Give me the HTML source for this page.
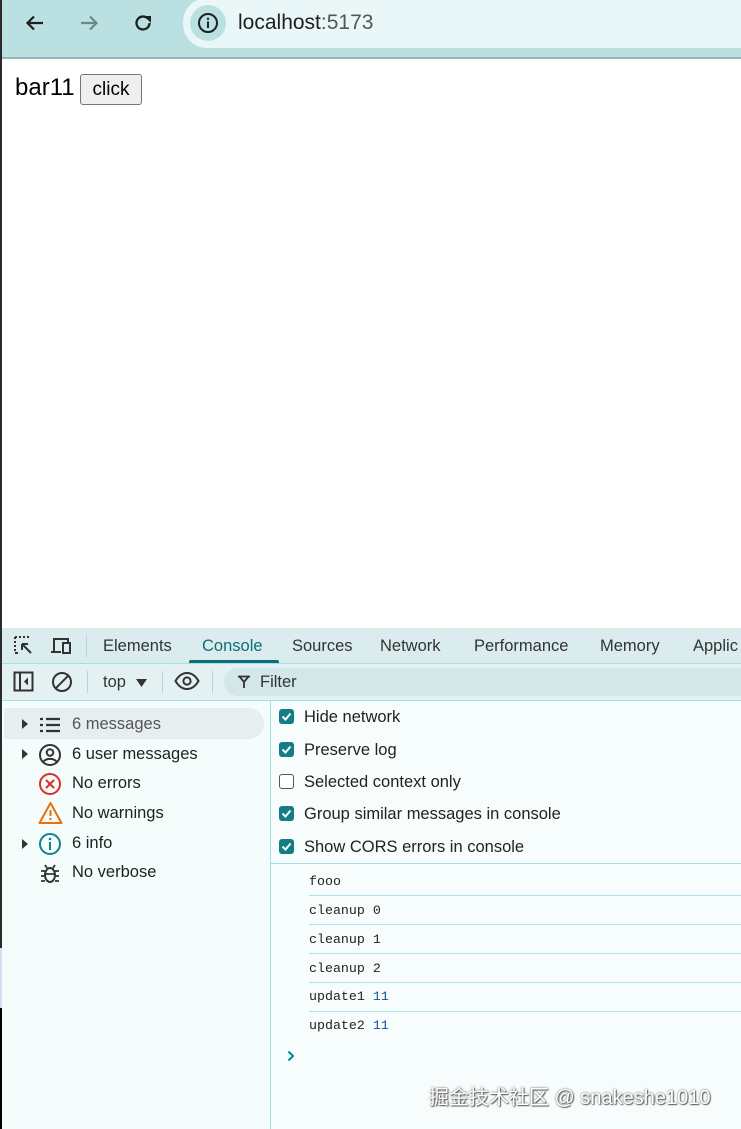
<!DOCTYPE html>
<html><head><meta charset="utf-8"><style>
*{margin:0;padding:0;box-sizing:border-box}
body{width:741px;height:1129px;position:relative;overflow:hidden;background:#fff;font-family:"Liberation Sans","Noto Sans CJK SC",sans-serif;color:#1f1f1f}
.a{position:absolute}
.t{position:absolute;white-space:nowrap}
.mono{font-family:"Liberation Mono",monospace;font-size:13.3px;color:#222}
.cb{position:absolute;left:279px;width:15px;height:15px;border-radius:3px;background:#137d85}
.cb svg{position:absolute;left:1px;top:1px}
.cbo{position:absolute;left:279px;width:15px;height:15px;border-radius:3px;border:1.5px solid #555;background:#fff}
.rl{position:absolute;left:309px;right:0;height:1px;background:#a6e4ee}
</style></head><body>
<div class="a" style="left:0;top:0;width:741px;height:58px;background:#bae0e2"></div>
<div class="a" style="left:0;top:57px;width:741px;height:2px;background:#94b7bb"></div>
<div class="a" style="left:183px;top:-2px;width:600px;height:50px;background:#eaf7f8;border-radius:24px 0 0 24px"></div>
<div class="a" style="left:190px;top:5px;width:36px;height:36px;border-radius:50%;background:#bae0e2"></div>
<svg class="a" style="left:196px;top:11px" width="24" height="24" viewBox="0 0 24 24"><circle cx="12" cy="12" r="9" fill="none" stroke="#1f1f1f" stroke-width="2"/><rect x="11" y="10.5" width="2" height="6.5" fill="#1f1f1f"/><circle cx="12" cy="7.8" r="1.2" fill="#1f1f1f"/></svg>
<div class="t" style="left:238px;top:11px;font-size:21px;color:#1f1f1f">localhost<span style="color:#555">:5173</span></div>
<svg class="a" style="left:24px;top:12px" width="22" height="22" viewBox="0 0 22 22"><path d="M19 11H4M10 4.5L3.5 11l6.5 6.5" fill="none" stroke="#1f1f1f" stroke-width="2.2"/></svg>
<svg class="a" style="left:78px;top:12px" width="22" height="22" viewBox="0 0 22 22"><path d="M3 11h15M12 4.5l6.5 6.5-6.5 6.5" fill="none" stroke="#6f8688" stroke-width="2.2"/></svg>
<svg class="a" style="left:132px;top:12px" width="22" height="22" viewBox="0 0 22 22"><path d="M17.5 11a6.5 6.5 0 1 1-2-4.7" fill="none" stroke="#1f1f1f" stroke-width="2.3"/><path d="M12 4h7v7z" fill="#1f1f1f"/></svg>
<div class="a" style="left:0;top:0;width:2px;height:948px;background:#2b2b2b"></div>
<div class="t" style="left:15px;top:74px;font-size:24px;color:#000">bar11</div>
<div class="a" style="left:80px;top:74px;width:62px;height:31px;border:1px solid #767676;border-radius:3px;background:#efefef;font-size:19px;color:#000;text-align:center;line-height:29px">click</div>
<div class="a" style="left:2px;top:628px;width:739px;height:36px;background:#dbecee"></div>
<div class="a" style="left:2px;top:663px;width:739px;height:1px;background:#a6dfe6"></div>
<svg class="a" style="left:14px;top:636px" width="22" height="22" viewBox="0 0 22 22"><path d="M1 1h2M5 1h2M9 1h2M13 1h2M1 1v2M1 5v2M1 9v2M1 13v2M1 17h3" stroke="#333" stroke-width="2" fill="none"/><path d="M8 8l9 9M8 8h6M8 8v6" stroke="#333" stroke-width="2" fill="none"/></svg>
<svg class="a" style="left:50px;top:636px" width="24" height="20" viewBox="0 0 24 20"><path d="M4 15V3h14v3" fill="none" stroke="#333" stroke-width="2"/><path d="M1 16h10" stroke="#333" stroke-width="2"/><rect x="13" y="7" width="7" height="10" fill="none" stroke="#333" stroke-width="2"/></svg>
<div class="a" style="left:86px;top:635px;width:1px;height:22px;background:#b5d5d8"></div>
<div class="t" style="left:103px;top:637px;font-size:16.5px;color:#333">Elements</div>
<div class="t" style="left:202px;top:637px;font-size:16.5px;color:#0e6e74">Console</div>
<div class="a" style="left:189px;top:660px;width:90px;height:3px;background:#0e6e74;border-radius:2px 2px 0 0"></div>
<div class="t" style="left:292px;top:637px;font-size:16.5px;color:#333">Sources</div>
<div class="t" style="left:380px;top:637px;font-size:16.5px;color:#333">Network</div>
<div class="t" style="left:474px;top:637px;font-size:16.5px;color:#333">Performance</div>
<div class="t" style="left:600px;top:637px;font-size:16.5px;color:#333">Memory</div>
<div class="t" style="left:693px;top:637px;font-size:16.5px;color:#333">Applic</div>
<div class="a" style="left:2px;top:664px;width:739px;height:36px;background:#e4f1f2"></div>
<div class="a" style="left:2px;top:700px;width:739px;height:1px;background:#a6dfe6"></div>
<svg class="a" style="left:13px;top:671px" width="21" height="21" viewBox="0 0 21 21"><rect x="1.5" y="1.5" width="18" height="18" fill="none" stroke="#333" stroke-width="2"/><path d="M7 2v17" stroke="#333" stroke-width="2"/><path d="M15 6.5l-4 4 4 4z" fill="#333"/></svg>
<svg class="a" style="left:51px;top:671px" width="22" height="22" viewBox="0 0 22 22"><circle cx="11" cy="11" r="9" fill="none" stroke="#333" stroke-width="2"/><path d="M4.6 17.4L17.4 4.6" stroke="#333" stroke-width="2"/></svg>
<div class="a" style="left:87px;top:671px;width:1px;height:22px;background:#b5d5d8"></div>
<div class="t" style="left:103px;top:673px;font-size:16.5px;color:#333">top</div>
<svg class="a" style="left:135px;top:678px" width="13" height="10" viewBox="0 0 13 10"><path d="M1 1h11L6.5 9z" fill="#333"/></svg>
<div class="a" style="left:162px;top:671px;width:1px;height:22px;background:#b5d5d8"></div>
<svg class="a" style="left:174px;top:671px" width="26" height="20" viewBox="0 0 26 20"><path d="M1.5 10C5 4 9 2 13 2s8 2 11.5 8C21 16 17 18 13 18S5 16 1.5 10z" fill="none" stroke="#333" stroke-width="2"/><circle cx="13" cy="10" r="3.6" fill="none" stroke="#333" stroke-width="2"/></svg>
<div class="a" style="left:212px;top:671px;width:1px;height:22px;background:#b5d5d8"></div>
<div class="a" style="left:224px;top:668px;width:530px;height:28px;border-radius:14px;background:#d3e6e8"></div>
<svg class="a" style="left:237px;top:675px" width="14" height="14" viewBox="0 0 14 14"><path d="M1 1.5h12M2.5 1.5l4.5 5.5v6M11.5 1.5L7 7" fill="none" stroke="#333" stroke-width="1.8"/></svg>
<div class="t" style="left:260px;top:673px;font-size:16.5px;color:#333">Filter</div>
<div class="a" style="left:2px;top:701px;width:268px;height:428px;background:#f5fcfc"></div>
<div class="a" style="left:0;top:948px;width:2px;height:60px;background:#d8dff0"></div>
<div class="a" style="left:0;top:1008px;width:2px;height:121px;background:#000"></div>
<div class="a" style="left:4px;top:708px;width:260px;height:31px;border-radius:0 16px 16px 0;background:#e7eeef"></div>
<div class="a" style="left:270px;top:701px;width:1px;height:428px;background:#a6dfe6"></div>
<svg class="a" style="left:21px;top:719px" width="8" height="10"><path d="M1 0l6 5-6 5z" fill="#333"/></svg>
<svg class="a" style="left:21px;top:749px" width="8" height="10"><path d="M1 0l6 5-6 5z" fill="#333"/></svg>
<svg class="a" style="left:21px;top:839px" width="8" height="10"><path d="M1 0l6 5-6 5z" fill="#333"/></svg>
<svg class="a" style="left:39px;top:715px" width="22" height="20" viewBox="0 0 22 20"><path d="M1 4h3M1 10h3M1 16h3M7 4h14M7 10h14M7 16h14" stroke="#333" stroke-width="2.2"/></svg>
<svg class="a" style="left:38px;top:743px" width="24" height="24" viewBox="0 0 24 24"><circle cx="12" cy="12" r="10" fill="none" stroke="#333" stroke-width="2"/><circle cx="12" cy="9.5" r="3.3" fill="none" stroke="#333" stroke-width="2"/><path d="M5.5 18.5c3-3.5 10-3.5 13 0" fill="none" stroke="#333" stroke-width="2"/></svg>
<svg class="a" style="left:38px;top:772px" width="24" height="24" viewBox="0 0 24 24"><circle cx="12" cy="12" r="10" fill="none" stroke="#d93025" stroke-width="2"/><path d="M8 8l8 8M16 8l-8 8" stroke="#d93025" stroke-width="2"/></svg>
<svg class="a" style="left:38px;top:801px" width="25" height="24" viewBox="0 0 25 24"><path d="M12.5 2L23.5 22H1.5z" fill="none" stroke="#e8710a" stroke-width="2" stroke-linejoin="round"/><path d="M12.5 9v6" stroke="#e8710a" stroke-width="2"/><circle cx="12.5" cy="18" r="1.2" fill="#e8710a"/></svg>
<svg class="a" style="left:38px;top:832px" width="24" height="24" viewBox="0 0 24 24"><circle cx="12" cy="12" r="10" fill="none" stroke="#10848c" stroke-width="2"/><rect x="11" y="10" width="2" height="8" fill="#10848c"/><circle cx="12" cy="7" r="1.3" fill="#10848c"/></svg>
<svg class="a" style="left:40px;top:862px" width="20" height="22" viewBox="0 0 20 22"><ellipse cx="10" cy="13" rx="5" ry="7" fill="none" stroke="#333" stroke-width="2"/><path d="M7 6l-2-3M13 6l2-3M1 9h4M15 9h4M1 14h4M15 14h4M1 19h4M15 19h4M6 12h8" stroke="#333" stroke-width="1.8"/></svg>
<div class="t" style="left:72px;top:715px;font-size:16.5px;color:#555">6 messages</div>
<div class="t" style="left:72px;top:745px;font-size:16.5px;color:#222">6 user messages</div>
<div class="t" style="left:72px;top:774px;font-size:16.5px;color:#222">No errors</div>
<div class="t" style="left:72px;top:804px;font-size:16.5px;color:#222">No warnings</div>
<div class="t" style="left:72px;top:834px;font-size:16.5px;color:#222">6 info</div>
<div class="t" style="left:72px;top:863px;font-size:16.5px;color:#222">No verbose</div>
<div class="a" style="left:271px;top:701px;width:470px;height:428px;background:#f7fdfd"></div>
<div class="cb" style="top:709px"><svg width="13" height="13" viewBox="0 0 13 13"><path d="M2.5 6.5l3 3 5-6" fill="none" stroke="#fff" stroke-width="2"/></svg></div>
<div class="cb" style="top:742px"><svg width="13" height="13" viewBox="0 0 13 13"><path d="M2.5 6.5l3 3 5-6" fill="none" stroke="#fff" stroke-width="2"/></svg></div>
<div class="cbo" style="top:774px"></div>
<div class="cb" style="top:806px"><svg width="13" height="13" viewBox="0 0 13 13"><path d="M2.5 6.5l3 3 5-6" fill="none" stroke="#fff" stroke-width="2"/></svg></div>
<div class="cb" style="top:839px"><svg width="13" height="13" viewBox="0 0 13 13"><path d="M2.5 6.5l3 3 5-6" fill="none" stroke="#fff" stroke-width="2"/></svg></div>
<div class="t" style="left:304px;top:708px;font-size:16.5px;color:#222">Hide network</div>
<div class="t" style="left:304px;top:741px;font-size:16.5px;color:#222">Preserve log</div>
<div class="t" style="left:304px;top:773px;font-size:16.5px;color:#222">Selected context only</div>
<div class="t" style="left:304px;top:805px;font-size:16.5px;color:#222">Group similar messages in console</div>
<div class="t" style="left:304px;top:838px;font-size:16.5px;color:#222">Show CORS errors in console</div>
<div class="a" style="left:271px;top:863px;width:470px;height:1px;background:#a6dfe6"></div>
<div class="t mono" style="left:309px;top:874px">fooo</div>
<div class="rl" style="top:895px"></div>
<div class="t mono" style="left:309px;top:903px">cleanup 0</div>
<div class="rl" style="top:924px"></div>
<div class="t mono" style="left:309px;top:932px">cleanup 1</div>
<div class="rl" style="top:953px"></div>
<div class="t mono" style="left:309px;top:961px">cleanup 2</div>
<div class="rl" style="top:982px"></div>
<div class="t mono" style="left:309px;top:989px">update1 <span style="color:#1a4f9c">11</span></div>
<div class="rl" style="top:1011px"></div>
<div class="t mono" style="left:309px;top:1018px">update2 <span style="color:#1a4f9c">11</span></div>
<svg class="a" style="left:287px;top:1050px" width="8" height="12" viewBox="0 0 8 12"><path d="M1.5 1.5l4.5 4.5-4.5 4.5" fill="none" stroke="#10848c" stroke-width="2"/></svg>
<div class="t" style="left:429px;top:1081px;font-size:20px;color:#fff;text-shadow:0 0 2px #555,1px 1px 1px #666">掘金技术社区 @ snakeshe1010</div>
</body></html>
